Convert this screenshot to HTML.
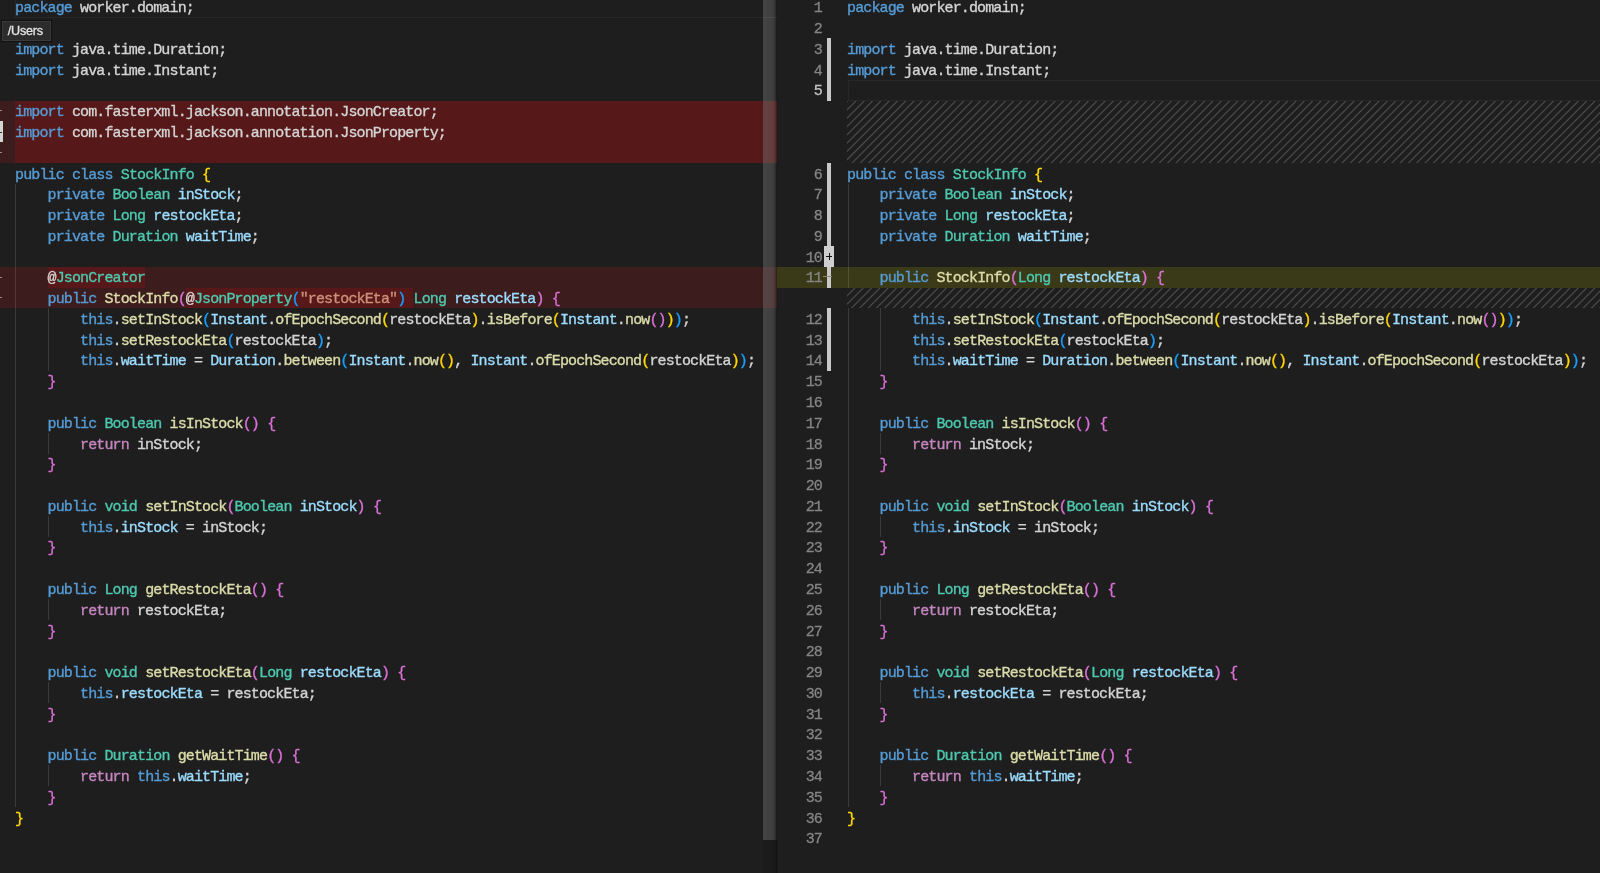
<!DOCTYPE html>
<html><head><meta charset="utf-8"><style>
html,body{margin:0;padding:0;}
body{width:1600px;height:873px;overflow:hidden;background:#1e1e1e;position:relative;font-family:"Liberation Mono",monospace;}
.p{position:absolute;top:0;height:873px;overflow:hidden;will-change:transform;}
#L{left:0;width:763.0px;}
#R{left:777.0px;width:823.0px;}
.a{position:absolute;}
.row{position:absolute;left:0;white-space:pre;font-size:15.0px;letter-spacing:-0.87px;-webkit-text-stroke-width:0.35px;line-height:20.776px;height:20.776px;color:#d4d4d4;}
i{font-style:normal;}
.k{color:#569cd6}
.c{color:#c586c0}
.t{color:#4ec9b0}
.f{color:#dcdcaa}
.v{color:#9cdcfe}
.s{color:#ce9178}
.y{color:#ffd700}
.o{color:#da70d6}
.b{color:#179fff}
.hatch{position:absolute;background:repeating-linear-gradient(-45deg, rgba(204,204,204,0.2) 0px, rgba(204,204,204,0.2) 1.2px, transparent 1.2px, transparent 5.83px);}
.g{position:absolute;width:1px;background:rgba(255,255,255,0.125);}
.ln{position:absolute;letter-spacing:-0.87px;-webkit-text-stroke-width:0.3px;font-size:15.0px;line-height:20.776px;height:20.776px;color:#858585;text-align:right;white-space:pre;}
</style></head><body>
<div class="p" id="L">
<div class="a" style="left:0;top:100.56px;width:15.0px;height:20.79px;background:#3c1c1c"></div>
<div class="a" style="left:15.0px;top:100.56px;width:748.0px;height:20.79px;background:#561818"></div>
<div class="a" style="left:0;top:121.34px;width:15.0px;height:20.79px;background:#3c1c1c"></div>
<div class="a" style="left:15.0px;top:121.34px;width:748.0px;height:20.79px;background:#561818"></div>
<div class="a" style="left:0;top:142.11px;width:15.0px;height:20.79px;background:#3c1c1c"></div>
<div class="a" style="left:15.0px;top:142.11px;width:748.0px;height:20.79px;background:#561818"></div>
<div class="a" style="left:0;top:266.77px;width:763.0px;height:20.79px;background:#3c1c1c"></div>
<div class="a" style="left:0;top:287.54px;width:763.0px;height:20.79px;background:#3c1c1c"></div>
<div class="a" style="left:47.52px;top:266.77px;width:97.56px;height:20.78px;background:#561818"></div>
<div class="a" style="left:185.73px;top:287.54px;width:227.64px;height:20.78px;background:#561818"></div>
<div class="a" style="left:14.5px;top:-3.32px;width:763.0px;height:21.08px;border:1px solid #282828;box-sizing:border-box"></div>
<div class="g" style="left:15.00px;top:183.66px;height:623.28px"></div>
<div class="g" style="left:47.52px;top:308.32px;height:62.33px"></div>
<div class="g" style="left:47.52px;top:432.98px;height:20.78px"></div>
<div class="g" style="left:47.52px;top:516.08px;height:20.78px"></div>
<div class="g" style="left:47.52px;top:599.18px;height:20.78px"></div>
<div class="g" style="left:47.52px;top:682.29px;height:20.78px"></div>
<div class="g" style="left:47.52px;top:765.39px;height:20.78px"></div>
<div class="row" style="left:15.0px;top:-0.70px"><i class="k">package</i> worker.domain;</div>
<div class="row" style="left:15.0px;top:40.85px"><i class="k">import</i> java.time.Duration;</div>
<div class="row" style="left:15.0px;top:61.63px"><i class="k">import</i> java.time.Instant;</div>
<div class="row" style="left:15.0px;top:103.18px"><i class="k">import</i> com.fasterxml.jackson.annotation.JsonCreator;</div>
<div class="row" style="left:15.0px;top:123.96px"><i class="k">import</i> com.fasterxml.jackson.annotation.JsonProperty;</div>
<div class="row" style="left:15.0px;top:165.51px"><i class="k">public</i> <i class="k">class</i> <i class="t">StockInfo</i> <i class="y">{</i></div>
<div class="row" style="left:15.0px;top:186.28px">    <i class="k">private</i> <i class="t">Boolean</i> <i class="v">inStock</i>;</div>
<div class="row" style="left:15.0px;top:207.06px">    <i class="k">private</i> <i class="t">Long</i> <i class="v">restockEta</i>;</div>
<div class="row" style="left:15.0px;top:227.84px">    <i class="k">private</i> <i class="t">Duration</i> <i class="v">waitTime</i>;</div>
<div class="row" style="left:15.0px;top:269.39px">    @<i class="t">JsonCreator</i></div>
<div class="row" style="left:15.0px;top:290.16px">    <i class="k">public</i> <i class="f">StockInfo</i><i class="o">(</i>@<i class="t">JsonProperty</i><i class="b">(</i><i class="s">&quot;restockEta&quot;</i><i class="b">)</i> <i class="t">Long</i> <i class="v">restockEta</i><i class="o">)</i> <i class="o">{</i></div>
<div class="row" style="left:15.0px;top:310.94px">        <i class="k">this</i>.<i class="f">setInStock</i><i class="b">(</i><i class="v">Instant</i>.<i class="f">ofEpochSecond</i><i class="y">(</i>restockEta<i class="y">)</i>.<i class="f">isBefore</i><i class="y">(</i><i class="v">Instant</i>.<i class="f">now</i><i class="o">()</i><i class="y">)</i><i class="b">)</i>;</div>
<div class="row" style="left:15.0px;top:331.72px">        <i class="k">this</i>.<i class="f">setRestockEta</i><i class="b">(</i>restockEta<i class="b">)</i>;</div>
<div class="row" style="left:15.0px;top:352.49px">        <i class="k">this</i>.<i class="v">waitTime</i> = <i class="v">Duration</i>.<i class="f">between</i><i class="b">(</i><i class="v">Instant</i>.<i class="f">now</i><i class="y">()</i>, <i class="v">Instant</i>.<i class="f">ofEpochSecond</i><i class="y">(</i>restockEta<i class="y">)</i><i class="b">)</i>;</div>
<div class="row" style="left:15.0px;top:373.27px">    <i class="o">}</i></div>
<div class="row" style="left:15.0px;top:414.82px">    <i class="k">public</i> <i class="t">Boolean</i> <i class="f">isInStock</i><i class="o">()</i> <i class="o">{</i></div>
<div class="row" style="left:15.0px;top:435.60px">        <i class="c">return</i> inStock;</div>
<div class="row" style="left:15.0px;top:456.37px">    <i class="o">}</i></div>
<div class="row" style="left:15.0px;top:497.92px">    <i class="k">public</i> <i class="t">void</i> <i class="f">setInStock</i><i class="o">(</i><i class="t">Boolean</i> <i class="v">inStock</i><i class="o">)</i> <i class="o">{</i></div>
<div class="row" style="left:15.0px;top:518.70px">        <i class="k">this</i>.<i class="v">inStock</i> = inStock;</div>
<div class="row" style="left:15.0px;top:539.48px">    <i class="o">}</i></div>
<div class="row" style="left:15.0px;top:581.03px">    <i class="k">public</i> <i class="t">Long</i> <i class="f">getRestockEta</i><i class="o">()</i> <i class="o">{</i></div>
<div class="row" style="left:15.0px;top:601.80px">        <i class="c">return</i> restockEta;</div>
<div class="row" style="left:15.0px;top:622.58px">    <i class="o">}</i></div>
<div class="row" style="left:15.0px;top:664.13px">    <i class="k">public</i> <i class="t">void</i> <i class="f">setRestockEta</i><i class="o">(</i><i class="t">Long</i> <i class="v">restockEta</i><i class="o">)</i> <i class="o">{</i></div>
<div class="row" style="left:15.0px;top:684.91px">        <i class="k">this</i>.<i class="v">restockEta</i> = restockEta;</div>
<div class="row" style="left:15.0px;top:705.68px">    <i class="o">}</i></div>
<div class="row" style="left:15.0px;top:747.24px">    <i class="k">public</i> <i class="t">Duration</i> <i class="f">getWaitTime</i><i class="o">()</i> <i class="o">{</i></div>
<div class="row" style="left:15.0px;top:768.01px">        <i class="c">return</i> <i class="k">this</i>.<i class="v">waitTime</i>;</div>
<div class="row" style="left:15.0px;top:788.79px">    <i class="o">}</i></div>
<div class="row" style="left:15.0px;top:809.56px"><i class="y">}</i></div>
<div class="a" style="left:0;top:110.45px;width:1.8px;height:1px;background:#9a8a8a"></div>
<div class="a" style="left:0;top:152.00px;width:1.8px;height:1px;background:#9a8a8a"></div>
<div class="a" style="left:0;top:276.66px;width:1.8px;height:1px;background:#9a8a8a"></div>
<div class="a" style="left:0;top:297.43px;width:1.8px;height:1px;background:#9a8a8a"></div>
<div class="a" style="left:0;top:121.2px;width:2.6px;height:20.8px;background:#d4d4d4"></div>
<div class="a" style="left:0;top:131.5px;width:1.6px;height:1px;background:#333"></div>
<div class="a" style="left:2px;top:21px;width:49px;height:20px;box-sizing:border-box;background:#2c2c2c;border:1px solid #393939;box-shadow:0 0 1px 1px rgba(0,0,0,0.35)"></div>
<div class="a" style="left:7.8px;top:22.6px;font-family:'Liberation Sans',sans-serif;font-size:12.6px;letter-spacing:-0.25px;-webkit-text-stroke-width:0.3px;line-height:16px;color:#e4e4e4">/Users</div>
</div>
<div class="a" style="left:763.0px;top:0;width:14.0px;height:873px;background:#1b1b1b"></div>
<div class="a" style="left:763.0px;top:100.56px;width:14.0px;height:62.33px;background:#561818"></div>
<div class="a" style="left:763.0px;top:266.77px;width:14.0px;height:41.55px;background:#3c1c1c"></div>
<div class="a" style="left:763.0px;top:0;width:14.0px;height:839.5px;background:linear-gradient(90deg,rgba(121,121,121,0.44),rgba(121,121,121,0.39) 65%,rgba(121,121,121,0.28) 86%,rgba(121,121,121,0.04))"></div>
<div class="a" style="left:775.5px;top:839.5px;width:1.5px;height:34px;background:rgba(0,0,0,0.25)"></div>
<div class="a" style="left:775.2px;top:0;width:2.6px;height:873px;background:linear-gradient(90deg,rgba(0,0,0,0.05),rgba(0,0,0,0.22) 60%,rgba(0,0,0,0))"></div>
<div class="a" style="left:763.0px;top:16.8px;width:14.0px;height:1px;background:rgba(255,255,255,0.06)"></div>
<div class="p" id="R">
<svg class="a" style="left:70.00px;top:100.56px" width="753.00" height="62.33" viewBox="0 0 753.00 62.33"><path d="M-16.01 0L-80.34 64.33M-7.71 0L-72.03 64.33M0.60 0L-63.73 64.33M8.90 0L-55.42 64.33M17.21 0L-47.12 64.33M25.51 0L-38.81 64.33M33.82 0L-30.51 64.33M42.12 0L-22.20 64.33M50.43 0L-13.90 64.33M58.73 0L-5.59 64.33M67.04 0L2.71 64.33M75.34 0L11.02 64.33M83.65 0L19.32 64.33M91.96 0L27.63 64.33M100.26 0L35.93 64.33M108.56 0L44.24 64.33M116.87 0L52.54 64.33M125.18 0L60.85 64.33M133.48 0L69.15 64.33M141.79 0L77.46 64.33M150.09 0L85.76 64.33M158.40 0L94.07 64.33M166.70 0L102.37 64.33M175.01 0L110.68 64.33M183.31 0L118.98 64.33M191.61 0L127.29 64.33M199.92 0L135.59 64.33M208.23 0L143.90 64.33M216.53 0L152.20 64.33M224.83 0L160.51 64.33M233.14 0L168.81 64.33M241.45 0L177.12 64.33M249.75 0L185.42 64.33M258.06 0L193.73 64.33M266.36 0L202.03 64.33M274.67 0L210.34 64.33M282.97 0L218.64 64.33M291.28 0L226.95 64.33M299.58 0L235.25 64.33M307.89 0L243.56 64.33M316.19 0L251.86 64.33M324.50 0L260.17 64.33M332.80 0L268.47 64.33M341.10 0L276.78 64.33M349.41 0L285.08 64.33M357.72 0L293.39 64.33M366.02 0L301.69 64.33M374.32 0L310.00 64.33M382.63 0L318.30 64.33M390.94 0L326.61 64.33M399.24 0L334.91 64.33M407.55 0L343.22 64.33M415.85 0L351.52 64.33M424.16 0L359.83 64.33M432.46 0L368.13 64.33M440.77 0L376.44 64.33M449.07 0L384.74 64.33M457.37 0L393.05 64.33M465.68 0L401.35 64.33M473.99 0L409.66 64.33M482.29 0L417.96 64.33M490.59 0L426.27 64.33M498.90 0L434.57 64.33M507.21 0L442.88 64.33M515.51 0L451.18 64.33M523.82 0L459.49 64.33M532.12 0L467.79 64.33M540.43 0L476.10 64.33M548.73 0L484.40 64.33M557.04 0L492.71 64.33M565.34 0L501.01 64.33M573.65 0L509.32 64.33M581.95 0L517.62 64.33M590.26 0L525.93 64.33M598.56 0L534.23 64.33M606.87 0L542.54 64.33M615.17 0L550.84 64.33M623.48 0L559.15 64.33M631.78 0L567.45 64.33M640.09 0L575.76 64.33M648.39 0L584.06 64.33M656.70 0L592.37 64.33M665.00 0L600.67 64.33M673.31 0L608.98 64.33M681.61 0L617.28 64.33M689.92 0L625.59 64.33M698.22 0L633.89 64.33M706.53 0L642.20 64.33M714.83 0L650.50 64.33M723.13 0L658.81 64.33M731.44 0L667.11 64.33M739.75 0L675.42 64.33M748.05 0L683.72 64.33M756.36 0L692.03 64.33M764.66 0L700.33 64.33M772.97 0L708.64 64.33M781.27 0L716.94 64.33M789.58 0L725.25 64.33M797.88 0L733.55 64.33M806.19 0L741.86 64.33M814.49 0L750.16 64.33M822.80 0L758.47 64.33M831.10 0L766.77 64.33" stroke="#4a4a4a" stroke-width="1.25" fill="none"/></svg>
<svg class="a" style="left:70.00px;top:287.54px" width="753.00" height="20.78" viewBox="0 0 753.00 20.78"><path d="M-8.98 0L-31.76 22.78M-0.66 0L-23.44 22.78M7.66 0L-15.12 22.78M15.98 0L-6.80 22.78M24.30 0L1.52 22.78M32.62 0L9.84 22.78M40.94 0L18.16 22.78M49.26 0L26.48 22.78M57.58 0L34.80 22.78M65.90 0L43.12 22.78M74.22 0L51.44 22.78M82.54 0L59.76 22.78M90.86 0L68.08 22.78M99.18 0L76.40 22.78M107.50 0L84.72 22.78M115.82 0L93.04 22.78M124.14 0L101.36 22.78M132.46 0L109.68 22.78M140.78 0L118.00 22.78M149.10 0L126.32 22.78M157.42 0L134.64 22.78M165.74 0L142.96 22.78M174.06 0L151.28 22.78M182.38 0L159.60 22.78M190.70 0L167.92 22.78M199.02 0L176.24 22.78M207.34 0L184.56 22.78M215.66 0L192.88 22.78M223.98 0L201.20 22.78M232.30 0L209.52 22.78M240.62 0L217.84 22.78M248.94 0L226.16 22.78M257.26 0L234.48 22.78M265.58 0L242.80 22.78M273.90 0L251.12 22.78M282.22 0L259.44 22.78M290.54 0L267.76 22.78M298.86 0L276.08 22.78M307.18 0L284.40 22.78M315.50 0L292.72 22.78M323.82 0L301.04 22.78M332.14 0L309.36 22.78M340.46 0L317.68 22.78M348.78 0L326.00 22.78M357.10 0L334.32 22.78M365.42 0L342.64 22.78M373.74 0L350.96 22.78M382.06 0L359.28 22.78M390.38 0L367.60 22.78M398.70 0L375.92 22.78M407.02 0L384.24 22.78M415.34 0L392.56 22.78M423.66 0L400.88 22.78M431.98 0L409.20 22.78M440.30 0L417.52 22.78M448.62 0L425.84 22.78M456.94 0L434.16 22.78M465.26 0L442.48 22.78M473.58 0L450.80 22.78M481.90 0L459.12 22.78M490.22 0L467.44 22.78M498.54 0L475.76 22.78M506.86 0L484.08 22.78M515.18 0L492.40 22.78M523.50 0L500.72 22.78M531.82 0L509.04 22.78M540.14 0L517.36 22.78M548.46 0L525.68 22.78M556.78 0L534.00 22.78M565.10 0L542.32 22.78M573.42 0L550.64 22.78M581.74 0L558.96 22.78M590.06 0L567.28 22.78M598.38 0L575.60 22.78M606.70 0L583.92 22.78M615.02 0L592.24 22.78M623.34 0L600.56 22.78M631.66 0L608.88 22.78M639.98 0L617.20 22.78M648.30 0L625.52 22.78M656.62 0L633.84 22.78M664.94 0L642.16 22.78M673.26 0L650.48 22.78M681.58 0L658.80 22.78M689.90 0L667.12 22.78M698.22 0L675.44 22.78M706.54 0L683.76 22.78M714.86 0L692.08 22.78M723.18 0L700.40 22.78M731.50 0L708.72 22.78M739.82 0L717.04 22.78M748.14 0L725.36 22.78M756.46 0L733.68 22.78M764.78 0L742.00 22.78M773.10 0L750.32 22.78M781.42 0L758.64 22.78M789.74 0L766.96 22.78" stroke="#4a4a4a" stroke-width="1.25" fill="none"/></svg>
<div class="a" style="left:0;top:266.77px;width:823.0px;height:20.78px;background:#3b3a18"></div>
<div class="a" style="left:70.5px;top:80.28px;width:753.0px;height:20.78px;border:1px solid #282828;box-sizing:border-box"></div>
<div class="g" style="left:70.50px;top:183.66px;height:103.88px"></div>
<div class="g" style="left:70.50px;top:308.32px;height:498.62px"></div>
<div class="g" style="left:103.02px;top:308.32px;height:62.33px"></div>
<div class="g" style="left:103.02px;top:432.98px;height:20.78px"></div>
<div class="g" style="left:103.02px;top:516.08px;height:20.78px"></div>
<div class="g" style="left:103.02px;top:599.18px;height:20.78px"></div>
<div class="g" style="left:103.02px;top:682.29px;height:20.78px"></div>
<div class="g" style="left:103.02px;top:765.39px;height:20.78px"></div>
<div class="ln" style="left:0;width:45.00px;top:-0.70px;color:#858585">1</div>
<div class="row" style="left:70.0px;top:-0.70px"><i class="k">package</i> worker.domain;</div>
<div class="ln" style="left:0;width:45.00px;top:20.08px;color:#858585">2</div>
<div class="ln" style="left:0;width:45.00px;top:40.85px;color:#858585">3</div>
<div class="row" style="left:70.0px;top:40.85px"><i class="k">import</i> java.time.Duration;</div>
<div class="ln" style="left:0;width:45.00px;top:61.63px;color:#858585">4</div>
<div class="row" style="left:70.0px;top:61.63px"><i class="k">import</i> java.time.Instant;</div>
<div class="ln" style="left:0;width:45.00px;top:82.40px;color:#c6c6c6">5</div>
<div class="ln" style="left:0;width:45.00px;top:165.51px;color:#858585">6</div>
<div class="row" style="left:70.0px;top:165.51px"><i class="k">public</i> <i class="k">class</i> <i class="t">StockInfo</i> <i class="y">{</i></div>
<div class="ln" style="left:0;width:45.00px;top:186.28px;color:#858585">7</div>
<div class="row" style="left:70.0px;top:186.28px">    <i class="k">private</i> <i class="t">Boolean</i> <i class="v">inStock</i>;</div>
<div class="ln" style="left:0;width:45.00px;top:207.06px;color:#858585">8</div>
<div class="row" style="left:70.0px;top:207.06px">    <i class="k">private</i> <i class="t">Long</i> <i class="v">restockEta</i>;</div>
<div class="ln" style="left:0;width:45.00px;top:227.84px;color:#858585">9</div>
<div class="row" style="left:70.0px;top:227.84px">    <i class="k">private</i> <i class="t">Duration</i> <i class="v">waitTime</i>;</div>
<div class="ln" style="left:0;width:45.00px;top:248.61px;color:#858585">10</div>
<div class="ln" style="left:0;width:45.00px;top:269.39px;color:#858585">11</div>
<div class="row" style="left:70.0px;top:269.39px">    <i class="k">public</i> <i class="f">StockInfo</i><i class="o">(</i><i class="t">Long</i> <i class="v">restockEta</i><i class="o">)</i> <i class="o">{</i></div>
<div class="ln" style="left:0;width:45.00px;top:310.94px;color:#858585">12</div>
<div class="row" style="left:70.0px;top:310.94px">        <i class="k">this</i>.<i class="f">setInStock</i><i class="b">(</i><i class="v">Instant</i>.<i class="f">ofEpochSecond</i><i class="y">(</i>restockEta<i class="y">)</i>.<i class="f">isBefore</i><i class="y">(</i><i class="v">Instant</i>.<i class="f">now</i><i class="o">()</i><i class="y">)</i><i class="b">)</i>;</div>
<div class="ln" style="left:0;width:45.00px;top:331.72px;color:#858585">13</div>
<div class="row" style="left:70.0px;top:331.72px">        <i class="k">this</i>.<i class="f">setRestockEta</i><i class="b">(</i>restockEta<i class="b">)</i>;</div>
<div class="ln" style="left:0;width:45.00px;top:352.49px;color:#858585">14</div>
<div class="row" style="left:70.0px;top:352.49px">        <i class="k">this</i>.<i class="v">waitTime</i> = <i class="v">Duration</i>.<i class="f">between</i><i class="b">(</i><i class="v">Instant</i>.<i class="f">now</i><i class="y">()</i>, <i class="v">Instant</i>.<i class="f">ofEpochSecond</i><i class="y">(</i>restockEta<i class="y">)</i><i class="b">)</i>;</div>
<div class="ln" style="left:0;width:45.00px;top:373.27px;color:#858585">15</div>
<div class="row" style="left:70.0px;top:373.27px">    <i class="o">}</i></div>
<div class="ln" style="left:0;width:45.00px;top:394.04px;color:#858585">16</div>
<div class="ln" style="left:0;width:45.00px;top:414.82px;color:#858585">17</div>
<div class="row" style="left:70.0px;top:414.82px">    <i class="k">public</i> <i class="t">Boolean</i> <i class="f">isInStock</i><i class="o">()</i> <i class="o">{</i></div>
<div class="ln" style="left:0;width:45.00px;top:435.60px;color:#858585">18</div>
<div class="row" style="left:70.0px;top:435.60px">        <i class="c">return</i> inStock;</div>
<div class="ln" style="left:0;width:45.00px;top:456.37px;color:#858585">19</div>
<div class="row" style="left:70.0px;top:456.37px">    <i class="o">}</i></div>
<div class="ln" style="left:0;width:45.00px;top:477.15px;color:#858585">20</div>
<div class="ln" style="left:0;width:45.00px;top:497.92px;color:#858585">21</div>
<div class="row" style="left:70.0px;top:497.92px">    <i class="k">public</i> <i class="t">void</i> <i class="f">setInStock</i><i class="o">(</i><i class="t">Boolean</i> <i class="v">inStock</i><i class="o">)</i> <i class="o">{</i></div>
<div class="ln" style="left:0;width:45.00px;top:518.70px;color:#858585">22</div>
<div class="row" style="left:70.0px;top:518.70px">        <i class="k">this</i>.<i class="v">inStock</i> = inStock;</div>
<div class="ln" style="left:0;width:45.00px;top:539.48px;color:#858585">23</div>
<div class="row" style="left:70.0px;top:539.48px">    <i class="o">}</i></div>
<div class="ln" style="left:0;width:45.00px;top:560.25px;color:#858585">24</div>
<div class="ln" style="left:0;width:45.00px;top:581.03px;color:#858585">25</div>
<div class="row" style="left:70.0px;top:581.03px">    <i class="k">public</i> <i class="t">Long</i> <i class="f">getRestockEta</i><i class="o">()</i> <i class="o">{</i></div>
<div class="ln" style="left:0;width:45.00px;top:601.80px;color:#858585">26</div>
<div class="row" style="left:70.0px;top:601.80px">        <i class="c">return</i> restockEta;</div>
<div class="ln" style="left:0;width:45.00px;top:622.58px;color:#858585">27</div>
<div class="row" style="left:70.0px;top:622.58px">    <i class="o">}</i></div>
<div class="ln" style="left:0;width:45.00px;top:643.36px;color:#858585">28</div>
<div class="ln" style="left:0;width:45.00px;top:664.13px;color:#858585">29</div>
<div class="row" style="left:70.0px;top:664.13px">    <i class="k">public</i> <i class="t">void</i> <i class="f">setRestockEta</i><i class="o">(</i><i class="t">Long</i> <i class="v">restockEta</i><i class="o">)</i> <i class="o">{</i></div>
<div class="ln" style="left:0;width:45.00px;top:684.91px;color:#858585">30</div>
<div class="row" style="left:70.0px;top:684.91px">        <i class="k">this</i>.<i class="v">restockEta</i> = restockEta;</div>
<div class="ln" style="left:0;width:45.00px;top:705.68px;color:#858585">31</div>
<div class="row" style="left:70.0px;top:705.68px">    <i class="o">}</i></div>
<div class="ln" style="left:0;width:45.00px;top:726.46px;color:#858585">32</div>
<div class="ln" style="left:0;width:45.00px;top:747.24px;color:#858585">33</div>
<div class="row" style="left:70.0px;top:747.24px">    <i class="k">public</i> <i class="t">Duration</i> <i class="f">getWaitTime</i><i class="o">()</i> <i class="o">{</i></div>
<div class="ln" style="left:0;width:45.00px;top:768.01px;color:#858585">34</div>
<div class="row" style="left:70.0px;top:768.01px">        <i class="c">return</i> <i class="k">this</i>.<i class="v">waitTime</i>;</div>
<div class="ln" style="left:0;width:45.00px;top:788.79px;color:#858585">35</div>
<div class="row" style="left:70.0px;top:788.79px">    <i class="o">}</i></div>
<div class="ln" style="left:0;width:45.00px;top:809.56px;color:#858585">36</div>
<div class="row" style="left:70.0px;top:809.56px"><i class="y">}</i></div>
<div class="ln" style="left:0;width:45.00px;top:830.34px;color:#858585">37</div>
<div class="a" style="left:50.00px;top:38.23px;width:4px;height:62.33px;background:#c8c8c8"></div>
<div class="a" style="left:50.00px;top:162.89px;width:4px;height:124.66px;background:#c8c8c8"></div>
<div class="a" style="left:50.00px;top:308.32px;width:4px;height:62.33px;background:#c8c8c8"></div>
<div class="a" style="left:47.00px;top:245.7px;width:10.3px;height:21.1px;background:#cfcfcf"></div>
<div class="a" style="left:48.80px;top:256.2px;width:6.6px;height:1.1px;background:#111"></div>
<div class="a" style="left:51.60px;top:253.1px;width:1.1px;height:7px;background:#111"></div>
<div class="a" style="left:46.00px;top:276.3px;width:9px;height:1px;background:#8a8a78"></div>
</div>
</body></html>
